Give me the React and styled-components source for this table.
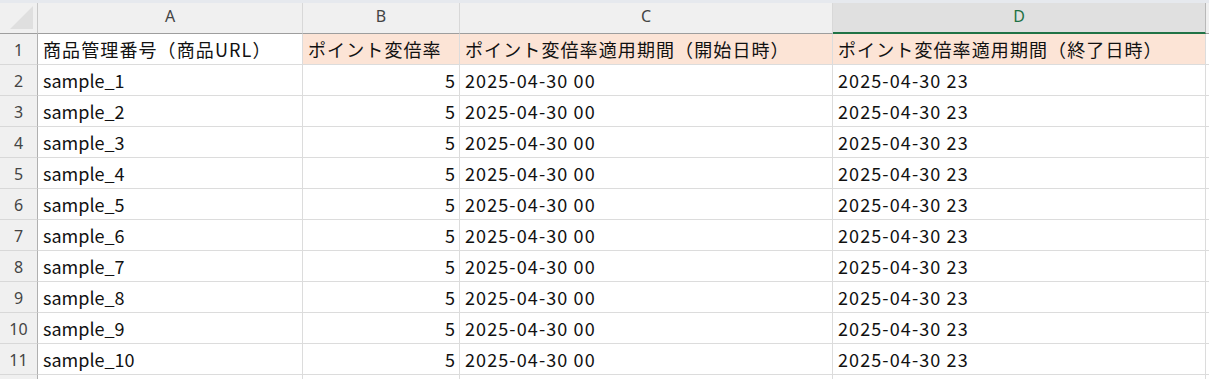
import React from 'react';
import styled, { createGlobalStyle } from 'styled-components';

const GlobalStyle = createGlobalStyle`
  html, body {
    margin: 0;
    padding: 0;
    background: #ffffff;
    overflow: hidden;
  }
  body {
    font-family: "Noto Sans CJK JP", "Noto Sans", sans-serif;
  }
`;

const columns = [
  { key: 'A', width: 265 },
  { key: 'B', width: 157 },
  { key: 'C', width: 373 },
  { key: 'D', width: 373, selected: true },
  { key: '', width: 200 },
];

const header = ['商品管理番号（商品URL）', 'ポイント変倍率', 'ポイント変倍率適用期間（開始日時）', 'ポイント変倍率適用期間（終了日時）', ''];

const rows = Array.from({ length: 10 }, (_, i) => [
  `sample_${i + 1}`,
  '5',
  '2025-04-30 00',
  '2025-04-30 23',
  '',
]);

function App() {
  const template = `38px ${columns.map((c) => c.width + 'px').join(' ')}`;
  return (
    <>
      <GlobalStyle />
      <Page>
        <TopStrip />
        <Sheet style={{ gridTemplateColumns: template }}>
          <Corner>
            <CornerMark />
          </Corner>
          {columns.map((c, i) => (
            <ColHead key={i} $selected={c.selected}>{c.key}</ColHead>
          ))}

          <RowHead>1</RowHead>
          {header.map((h, i) => (
            <Cell key={i} $accent={i > 0 && i < 4} $spaced>{h}</Cell>
          ))}

          {rows.map((r, ri) => (
            <React.Fragment key={ri}>
              <RowHead>{ri + 2}</RowHead>
              {r.map((v, ci) => (
                <Cell key={ci} $number={ci === 1} $spaced={ci > 1}>{v}</Cell>
              ))}
            </React.Fragment>
          ))}

          <RowHead />
          {columns.map((c, i) => (
            <Cell key={i} />
          ))}
        </Sheet>
      </Page>
    </>
  );
}

export default App;

// styles

const Page = styled.div`
  width: 1209px;
  height: 379px;
  overflow: hidden;
  background: #ffffff;
`;

const TopStrip = styled.div`
  height: 3px;
  background: #e6e9ee;
`;

const Sheet = styled.div`
  display: grid;
  grid-auto-rows: 31px;
  width: max-content;
`;

const Corner = styled.div`
  background: #f0f0f0;
  border-right: 1px solid #c8c8c8;
  border-bottom: 1px solid #9e9e9e;
  box-sizing: border-box;
  position: relative;
`;

const CornerMark = styled.div`
  position: absolute;
  right: 4px;
  bottom: 4px;
  width: 23px;
  height: 23px;
  background: #dfdfdf;
  clip-path: polygon(100% 0, 100% 100%, 0 100%);
`;

const ColHead = styled.div`
  box-sizing: border-box;
  display: flex;
  align-items: center;
  justify-content: center;
  padding-bottom: 4px;
  font-family: "Noto Sans", "Liberation Sans", sans-serif;
  font-size: 16px;
  background: ${(p) => (p.$selected ? '#e0e0e0' : '#f0f0f0')};
  color: ${(p) => (p.$selected ? '#1e7145' : '#444444')};
  border-right: 1px solid ${(p) => (p.$selected ? '#b8b8b8' : '#d8d8d8')};
  border-bottom: ${(p) => (p.$selected ? '2px solid #217346' : '1px solid #9e9e9e')};
`;

const RowHead = styled.div`
  box-sizing: border-box;
  display: flex;
  align-items: flex-end;
  justify-content: center;
  padding-bottom: 3px;
  font-family: "Noto Sans", "Liberation Sans", sans-serif;
  font-size: 16px;
  color: #444444;
  background: #f0f0f0;
  border-right: 1px solid #b0b0b0;
  border-bottom: 1px solid #d8d8d8;
`;

const Cell = styled.div`
  box-sizing: border-box;
  display: flex;
  align-items: flex-end;
  justify-content: ${(p) => (p.$number ? 'flex-end' : 'flex-start')};
  padding: 0 4px 2px 5px;
  font-size: 18px;
  line-height: 26px;
  letter-spacing: ${(p) => (p.$spaced ? '1.1px' : '0')};
  color: #111111;
  white-space: nowrap;
  overflow: hidden;
  background: ${(p) => (p.$accent ? '#fce4d6' : '#ffffff')};
  border-right: 1px solid #dcdcdc;
  border-bottom: 1px solid #dcdcdc;
`;
